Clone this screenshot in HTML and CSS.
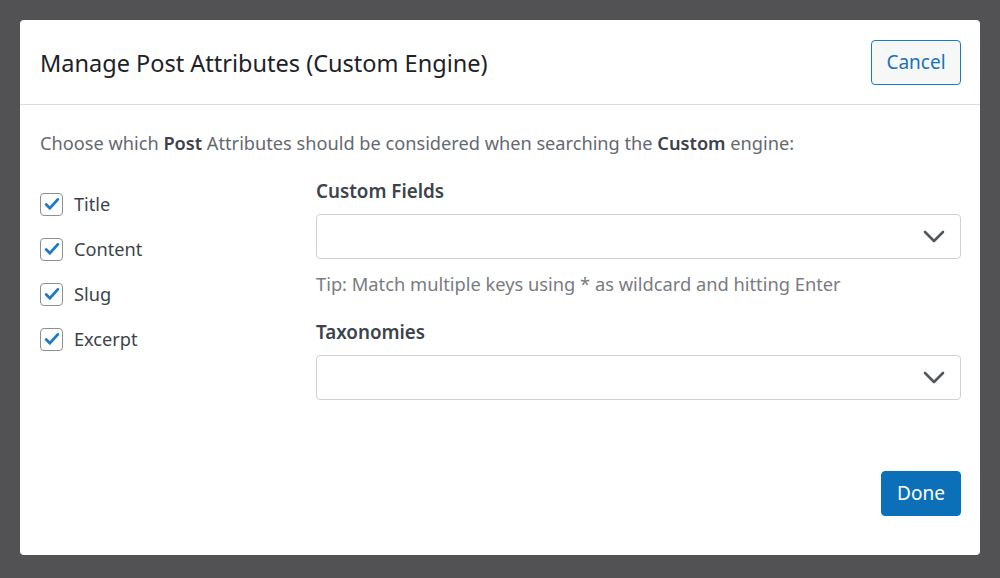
FILE: index.html
```html
<!DOCTYPE html>
<html>
<head>
<meta charset="utf-8">
<link rel="stylesheet" href="styles.css">
</head>
<body>
<div class="backdrop">
  <div class="modal">
    <div class="modal-header">
      <h1 class="modal-title">Manage Post Attributes (Custom Engine)</h1>
      <button class="btn btn-secondary">Cancel</button>
    </div>
    <div class="modal-body">
      <p class="intro">Choose which <strong>Post</strong> Attributes should be considered when searching the <strong>Custom</strong> engine:</p>
      <div class="columns">
        <ul class="attr-list">
          <li class="attr"><span class="check"><svg viewBox="0 0 24 24" width="20" height="20"><path d="M5 12.5l4.5 4.5L19 6.5" fill="none" stroke="#1e7ac4" stroke-width="3.4" stroke-linecap="round" stroke-linejoin="round"/></svg></span>Title</li>
          <li class="attr"><span class="check"><svg viewBox="0 0 24 24" width="20" height="20"><path d="M5 12.5l4.5 4.5L19 6.5" fill="none" stroke="#1e7ac4" stroke-width="3.4" stroke-linecap="round" stroke-linejoin="round"/></svg></span>Content</li>
          <li class="attr"><span class="check"><svg viewBox="0 0 24 24" width="20" height="20"><path d="M5 12.5l4.5 4.5L19 6.5" fill="none" stroke="#1e7ac4" stroke-width="3.4" stroke-linecap="round" stroke-linejoin="round"/></svg></span>Slug</li>
          <li class="attr"><span class="check"><svg viewBox="0 0 24 24" width="20" height="20"><path d="M5 12.5l4.5 4.5L19 6.5" fill="none" stroke="#1e7ac4" stroke-width="3.4" stroke-linecap="round" stroke-linejoin="round"/></svg></span>Excerpt</li>
        </ul>
        <div class="fields">
          <div class="field-label">Custom Fields</div>
          <div class="select"><svg class="chev" viewBox="0 0 22 13" width="22" height="13"><path d="M2 2l9 9 9-9" fill="none" stroke="#50575e" stroke-width="2.6" stroke-linecap="round" stroke-linejoin="round"/></svg></div>
          <div class="tip">Tip: Match multiple keys using * as wildcard and hitting Enter</div>
          <div class="field-label second">Taxonomies</div>
          <div class="select"><svg class="chev" viewBox="0 0 22 13" width="22" height="13"><path d="M2 2l9 9 9-9" fill="none" stroke="#50575e" stroke-width="2.6" stroke-linecap="round" stroke-linejoin="round"/></svg></div>
        </div>
      </div>
    </div>
    <div class="modal-footer">
      <button class="btn btn-primary">Done</button>
    </div>
  </div>
</div>
</body>
</html>
```

FILE: styles.css
```css
* { box-sizing: border-box; }
html, body { margin: 0; padding: 0; }
body {
  width: 1000px;
  height: 578px;
  background: #525254;
  font-family: "Noto Sans", "Open Sans", sans-serif;
  overflow: hidden;
}
.backdrop {
  padding: 20px;
  height: 578px;
}
.modal {
  width: 960px;
  height: 535px;
  background: #fff;
  border-radius: 4px;
  display: flex;
  flex-direction: column;
}
.modal-header {
  display: flex;
  align-items: center;
  justify-content: space-between;
  padding: 20px 19px 19px 20px;
  border-bottom: 1px solid #dcdcde;
}
.modal-title {
  margin: 0;
  font-size: 23.5px;
  font-weight: 400;
  color: #1d2327;
}
.btn {
  font-family: inherit;
  font-size: 19px;
  height: 45px;
  border-radius: 4px;
  cursor: pointer;
  line-height: 1;
}
.btn-secondary {
  width: 90px;
  background: #f6f7f7;
  border: 1px solid #1a7cc4;
  color: #1a72b8;
}
.btn-primary {
  width: 80px;
  background: #0b70b8;
  border: 1px solid #0b70b8;
  color: #fff;
}
.modal-body {
  flex: 1;
  padding: 26px 19px 0 20px;
}
.intro {
  margin: 0;
  font-size: 18.2px;
  line-height: 24px;
  color: #646970;
}
.intro strong {
  font-weight: 600;
  color: #3c434a;
}
.columns {
  display: grid;
  grid-template-columns: 276px 1fr;
  margin-top: 24px;
}
.attr-list {
  list-style: none;
  margin: 13px 0 0;
  padding: 0;
  display: flex;
  flex-direction: column;
  gap: 21px;
}
.attr {
  display: flex;
  align-items: center;
  gap: 11px;
  height: 24px;
  font-size: 18.2px;
  color: #3c434a;
}
.check {
  width: 23px;
  height: 23px;
  border: 1px solid #8c8f94;
  border-radius: 4px;
  display: flex;
  align-items: center;
  justify-content: center;
}
.field-label {
  font-size: 18.8px;
  font-weight: 600;
  line-height: 24px;
  color: #3c434a;
}
.field-label.second { margin-top: 24px; }
.select {
  margin-top: 11px;
  height: 45px;
  border: 1px solid #d0d0d2;
  border-radius: 4px;
  display: flex;
  align-items: center;
  justify-content: flex-end;
  padding-right: 15px;
}
.tip {
  margin-top: 13px;
  font-size: 18.3px;
  line-height: 24px;
  color: #787c82;
}
.modal-footer {
  display: flex;
  justify-content: flex-end;
  padding: 0 19px 39px 20px;
}
```
